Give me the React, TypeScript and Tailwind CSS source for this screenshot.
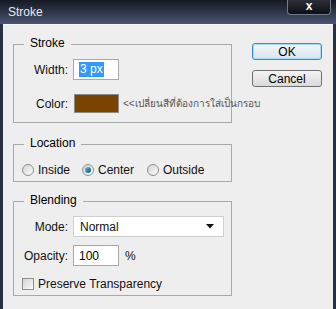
import type { ReactNode } from "react"

function Group({ title, className, children }: { title: string; className: string; children: ReactNode }) {
  return (
    <fieldset className={`w-[219px] min-w-0 border border-[#a9a9a9] ${className}`}>
      <legend className="ml-[10px] px-[6px] pb-[2px] text-[12px] leading-[16px] text-black">{title}</legend>
      {children}
    </fieldset>
  )
}

function Radio({ checked }: { checked?: boolean }) {
  return (
    <span className="flex h-[12px] w-[12px] shrink-0 items-center justify-center rounded-full border border-[#8e8f8f] bg-gradient-to-br from-[#d4d4d4] to-[#fcfcfc]">
      {checked && <span className="h-[6px] w-[6px] rounded-full bg-gradient-to-br from-[#6cc0ee] to-[#0b4c80]" />}
    </span>
  )
}

function Field({ children }: { children: ReactNode }) {
  return (
    <div className="flex h-[21px] w-[46px] items-center border border-[#a8a8a8] bg-white pl-[5px] text-[12px] text-black">
      {children}
    </div>
  )
}

export default function App() {
  return (
    <div className="flex h-[309px] w-[336px] flex-col bg-[#283041] font-['Liberation_Sans',Arial,sans-serif]">
      <div className="flex h-[24px] shrink-0 items-start justify-between bg-gradient-to-b from-[#151923] to-[#4b5571]">
        <span className="pl-[8px] pt-[4px] text-[12px] leading-[16px] text-[#e6ebf3]">Stroke</span>
        <div className="mr-[5px] flex h-[15px] w-[44px] items-center justify-center rounded-b-[4px] border border-t-0 border-[#727a8e] bg-gradient-to-b from-[#2c2f36] to-[#0d0f14] pb-[2px] text-[12px] font-bold leading-none text-white">
          x
        </div>
      </div>

      <div className="mx-[3px] flex flex-1 border-t border-[#f7f7f7] bg-[#eeeeee] text-[12px] text-[#111]">
        <div className="flex w-[229px] shrink-0 flex-col pl-[10px]">
          <Group title="Stroke" className="mt-[10px] pb-[9px] pt-[6px]">
            <div className="flex items-center">
              <span className="w-[54px] text-right">Width:</span>
              <div className="ml-[5px]">
                <Field>
                  <span className="bg-[#3399ff] px-[1px] leading-[15px] text-white">3 px</span>
                </Field>
              </div>
            </div>
            <div className="mt-[14px] flex items-center">
              <span className="w-[54px] shrink-0 text-right">Color:</span>
              <div className="ml-[6px] h-[19px] w-[45px] shrink-0 border border-[#8a8a8a] bg-[#7a4300]" />
              <span className="ml-[4px] shrink-0 whitespace-nowrap text-[10px] text-[#555]">&lt;&lt;เปลี่ยนสีที่ต้องการใส่เป็นกรอบ</span>
            </div>
          </Group>

          <Group title="Location" className="mt-[12px] pb-[3px] pt-[9px]">
            <div className="flex h-[16px] items-center pl-[8px]">
              <label className="flex w-[60px] items-center gap-[4px]">
                <Radio />
                <span>Inside</span>
              </label>
              <label className="flex w-[65px] items-center gap-[4px]">
                <Radio checked />
                <span>Center</span>
              </label>
              <label className="flex items-center gap-[4px]">
                <Radio />
                <span>Outside</span>
              </label>
            </div>
          </Group>

          <Group title="Blending" className="mt-[10px] pb-[3px] pt-[6px]">
            <div className="flex items-center">
              <span className="w-[54px] text-right">Mode:</span>
              <div className="ml-[5px] flex h-[21px] w-[151px] items-center justify-between border border-[#d0d0d0] bg-white pl-[6px] pr-[9px]">
                <span>Normal</span>
                <svg width="8" height="5" viewBox="0 0 8 5">
                  <path d="M0 0H8L4 4.5Z" fill="#111" />
                </svg>
              </div>
            </div>
            <div className="mt-[8px] flex items-center">
              <span className="w-[54px] text-right">Opacity:</span>
              <div className="ml-[5px]">
                <Field>100</Field>
              </div>
              <span className="ml-[6px]">%</span>
            </div>
            <label className="mt-[10px] flex h-[16px] items-center gap-[4px] pl-[8px]">
              <span className="h-[12px] w-[12px] shrink-0 border border-[#8e8f8f] bg-gradient-to-br from-[#d4d4d4] to-[#fbfbfb]" />
              <span>Preserve Transparency</span>
            </label>
          </Group>
        </div>

        <div className="ml-[20px] mt-[18px] flex flex-col gap-[10px]">
          <button className="h-[17px] w-[70px] rounded-[3px] border border-[#3c8ccb] bg-gradient-to-b from-[#f3f8fb] to-[#d8e4ec] text-[12px] leading-none text-black shadow-[inset_0_0_0_1px_#a8dcf5]">
            OK
          </button>
          <button className="h-[17px] w-[70px] rounded-[3px] border border-[#707070] bg-gradient-to-b from-[#f4f4f4] to-[#dadada] text-[12px] leading-none text-black">
            Cancel
          </button>
        </div>
      </div>
    </div>
  )
}
